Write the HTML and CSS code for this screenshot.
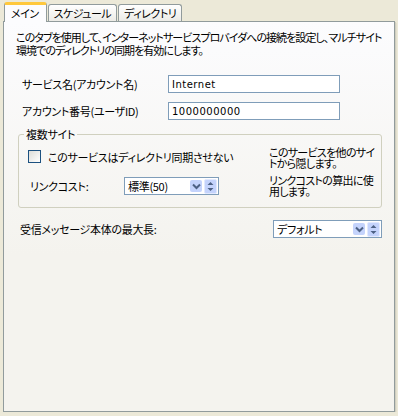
FILE: index.html
```html
<!DOCTYPE html>
<html>
<head>
    <title>Internet のプロパティ</title>
    <link rel="stylesheet" href="styles.css">
</head>
<body>
    <div class="tabs">
        <div class="tab tab-active">メイン</div>
        <div class="tab">スケジュール</div>
        <div class="tab">ディレクトリ</div>
    </div>

    <div class="panel">
        <p class="desc">このタブを使用して、インターネットサービスプロバイダへの接続を設定し、マルチサイト<br>環境でのディレクトリの同期を有効にします。</p>

        <div class="fields">
            <label class="field-label" for="serviceName">サービス名(アカウント名)</label>
            <input class="text-input" type="text" id="serviceName" value="Internet">
            <label class="field-label" for="accountId">アカウント番号(ユーザID)</label>
            <input class="text-input" type="text" id="accountId" value="1000000000">
        </div>

        <fieldset class="group">
            <legend>複数サイト</legend>
            <div class="group-body">
                <div class="group-left check-row">
                    <span class="checkbox"></span>
                    <span>このサービスはディレクトリ同期させない</span>
                </div>
                <div class="hint">このサービスを他のサイ<br>トから隠します。</div>

                <div class="group-left cost-row">
                    <span class="cost-label">リンクコスト:</span>
                    <div class="combo combo-cost">
                        <span class="combo-value">標準(50)</span>
                        <span class="drop-btn">
                            <svg width="9" height="7" viewBox="0 0 9 7"><path d="M1 1.5 L4.5 5 L8 1.5" fill="none" stroke="#4d6185" stroke-width="2"/></svg>
                        </span>
                        <span class="spin-btn">
                            <svg width="7" height="11" viewBox="0 0 7 11"><path d="M3.5 1 L6.5 4 L0.5 4 Z M0.5 7 L6.5 7 L3.5 10 Z" fill="#4d6185"/></svg>
                        </span>
                    </div>
                </div>
                <div class="hint">リンクコストの算出に使<br>用します。</div>
            </div>
        </fieldset>

        <div class="max-row">
            <span class="max-label">受信メッセージ本体の最大長:</span>
            <div class="combo combo-max">
                <span class="combo-value">デフォルト</span>
                <span class="drop-btn">
                    <svg width="9" height="7" viewBox="0 0 9 7"><path d="M1 1.5 L4.5 5 L8 1.5" fill="none" stroke="#4d6185" stroke-width="2"/></svg>
                </span>
                <span class="spin-btn">
                    <svg width="7" height="11" viewBox="0 0 7 11"><path d="M3.5 1 L6.5 4 L0.5 4 Z M0.5 7 L6.5 7 L3.5 10 Z" fill="#4d6185"/></svg>
                </span>
            </div>
        </div>
    </div>
</body>
</html>
```

FILE: styles.css
```css
body {
    margin: 0;
    padding: 0;
    background-color: #ece9d8;
    font-family: "Noto Sans CJK JP", "Liberation Sans", sans-serif;
    font-size: 11px;
    font-feature-settings: "palt";
    letter-spacing: -0.3px;
    color: #000;
}
.tabs {
    display: flex;
    align-items: flex-end;
    height: 21px;
    padding-left: 4px;
    position: relative;
    z-index: 2;
}
.tab {
    height: 16px;
    line-height: 16px;
    padding: 0 5px;
    margin-left: 1px;
    border: 1px solid #919b9c;
    border-bottom: none;
    border-radius: 3px 3px 0 0;
    background: linear-gradient(#ffffff, #ecebe6);
    letter-spacing: -0.5px;
}
.tab-active {
    height: 17px;
    line-height: 17px;
    margin-left: 0;
    margin-bottom: -1px;
    padding: 0 7px 0 6px;
    border-top: 3px solid #ffc83c;
    background: #fcfcfe;
}
.panel {
    margin-left: 3px;
    width: 366px;
    height: 389px;
    padding: 0 12px;
    border: 1px solid #919b9c;
    background: linear-gradient(#fcfcfe, #f4f3ee 60%);
    box-shadow: 1px 1px 0 #d0cebf, 2px 2px 0 #e3e0d0;
}
.desc {
    margin: 9px 0 0 0;
    line-height: 13px;
    white-space: nowrap;
    letter-spacing: -0.95px;
}
.fields {
    display: grid;
    grid-template-columns: 146px 172px;
    row-gap: 9px;
    align-items: center;
    margin-top: 18px;
    padding-left: 6px;
}
.text-input {
    box-sizing: border-box;
    width: 172px;
    height: 18px;
    margin: 0;
    padding: 0 3px;
    border: 1px solid #7f9db9;
    background: #fff;
    font-family: "DejaVu Sans", sans-serif;
    font-size: 10px;
    letter-spacing: 0.5px;
    outline: none;
}
.group {
    margin: 8px 0 0 2px;
    padding: 0 0 10px 5px;
    border: 1px solid #d0d0bf;
    border-radius: 3px;
}
.group legend {
    padding: 0 2px;
    line-height: 13px;
}
.group-body {
    display: grid;
    grid-template-columns: 1fr 112px;
    row-gap: 6px;
    padding: 6px 0 0 4px;
    align-items: center;
}
.group-left {
    display: flex;
    align-items: center;
    gap: 7px;
}
.check-row {
    margin-top: -3px;
}
.checkbox {
    box-sizing: border-box;
    width: 13px;
    height: 13px;
    border: 1px solid #1c5180;
    background: linear-gradient(135deg, #dcdcd7, #ffffff);
}
.hint {
    line-height: 11px;
    white-space: nowrap;
    letter-spacing: -0.7px;
}
.cost-row {
    gap: 0;
    padding-left: 2px;
}
.cost-label {
    width: 94px;
}
.combo {
    box-sizing: border-box;
    display: flex;
    align-items: center;
    height: 18px;
    padding: 0 1px 0 3px;
    border: 1px solid #7f9db9;
    background: #fff;
}
.combo-value {
    flex-grow: 1;
}
.combo-cost {
    width: 95px;
}
.combo-max {
    width: 109px;
}
.drop-btn, .spin-btn {
    display: flex;
    align-items: center;
    justify-content: center;
    box-sizing: border-box;
    background: #c4d3fc;
    border-radius: 2px;
}
.drop-btn {
    width: 12px;
    height: 12px;
    margin-right: 2px;
}
.spin-btn {
    width: 13px;
    height: 15px;
    border: 1px solid #e2e9fe;
}
.max-row {
    display: flex;
    justify-content: space-between;
    align-items: center;
    margin-top: 12px;
    padding-left: 4px;
}
```
